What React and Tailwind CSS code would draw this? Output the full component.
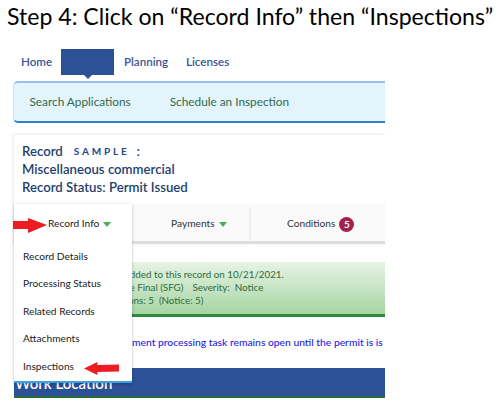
function RedArrow({ className, flip }) {
  return (
    <svg className={className} viewBox="0 0 34 15" preserveAspectRatio="none">
      <polygon
        fill="#ed1c24"
        points={flip ? "0,7.5 13,0 13,3.5 34,3 34,11 13,11.5 13,15" : "0,3 15,3 15,0 34,7 15,15 15,11 0,11"}
      />
    </svg>
  );
}

function Caret() {
  return <span className="inline-block w-0 h-0 border-l-[4px] border-r-[4px] border-t-[5px] border-l-transparent border-r-transparent border-t-[#4caf50]" />;
}

export default function App() {
  return (
    <div className="relative w-[500px] h-[404px] bg-white overflow-hidden font-['Lato',sans-serif]">
      <h1 className="h-[49px] pl-[7px] text-[23.1px] leading-[32px] text-black whitespace-nowrap">
        Step 4: Click on “Record Info” then “Inspections”
      </h1>

      <nav className="flex items-center h-[26px] pl-[21px] text-[11.6px] font-semibold text-[#3b5598]">
        <span className="w-[40px]">Home</span>
        <div className="relative w-[53px] h-[26px] bg-[#2c5197]">
          <span className="absolute left-[23px] top-[26px] w-0 h-0 border-l-[4px] border-r-[4px] border-t-[4px] border-l-transparent border-r-transparent border-t-[#2c5197]" />
        </div>
        <span className="ml-[10px] w-[62px]">Planning</span>
        <span>Licenses</span>
      </nav>

      <div className="ml-[13px] mt-[6px] w-[372px] h-[42px] flex items-center gap-[39px] pl-[15.5px] text-[11.8px] text-[#2f6b4a] bg-[#e4f4fc] border-t-2 border-t-[#93c1ec] border-b-2 border-b-[#2f7fd6] border-l border-l-[#d5e6f2] rounded-l-[5px]">
        <span>Search Applications</span>
        <span>Schedule an Inspection</span>
      </div>

      <div className="ml-[14px] mt-[11px] w-[371px] border-t border-t-[#eeeeee] shadow-[-1px_0_2px_#e8e8e8]">
        <div className="h-[69px] pl-[8px] pt-[7px] text-[13.2px] leading-[18px] font-semibold text-[#1d3f6e]">
          <div className="flex">
            <span>Record</span>
            <span className="ml-[11px] text-[10px] font-bold tracking-[2.8px] text-[#26468c]">SAMPLE</span>
            <span className="ml-[7px]">:</span>
          </div>
          <div>Miscellaneous commercial</div>
          <div>Record Status: Permit Issued</div>
        </div>

        <div className="flex h-[40px] pt-[3px] text-[10.2px] text-[#333] bg-[#fafafa] border-b-[3px] border-b-[#dddddd]">
          <div className="w-[118px]" />
          <div className="w-[119px] flex items-center pl-[39px] gap-[4px] border-r-2 border-r-[#eeeeee]">
            <span>Payments</span>
            <Caret />
          </div>
          <div className="flex items-center gap-[4px] pl-[36px]">
            <span>Conditions</span>
            <span className="w-[15px] h-[15px] rounded-full bg-[#a3214f] text-white text-[10px] font-bold flex items-center justify-center">5</span>
          </div>
        </div>
      </div>

      <div className="ml-[14px] mt-[18px] w-[371px] h-[55px] pl-[118px] text-[9.8px] leading-[13px] text-[#2f6b3a] bg-gradient-to-b from-[#e7f3e5] to-[#a5d5a3] border-b-[3px] border-b-[#2e8b3a] whitespace-nowrap overflow-hidden">
        <div className="pt-[6px] -ml-[7px]">added to this record on 10/21/2021.</div>
        <div className="-ml-[6px]">
          <span>te Final (SFG)</span>
          <span className="ml-[9px]">Severity:&nbsp; Notice</span>
        </div>
        <div className="-ml-[4px]">ons: 5&nbsp; (Notice: 5)</div>
      </div>

      <div className="ml-[132px] mt-[16px] w-[253px] h-[18px] text-[10.3px] leading-[18px] font-medium text-[#2222e6] whitespace-nowrap overflow-hidden">
        ment processing task remains open until the permit is is
      </div>

      <div className="ml-[14px] mt-[17px] w-[371px] h-[30px] bg-[#2c5197] border-b-[2px] border-b-[#2e6b3a] pl-[1px] text-white text-[15px] font-semibold leading-[30px]">
        Work Location
      </div>

      <div className="absolute left-[14px] top-[204px] w-[118px] h-[179px] z-10 bg-white shadow-[0_1px_3px_rgba(0,0,0,0.25)] border-b-2 border-b-[#3aa3e3] text-[10.2px] text-[#222]">
        <div className="relative h-[40px] flex items-center pl-[34px] gap-[4px]">
          <span>Record Info</span>
          <Caret />
        </div>
        <div className="flex flex-col pl-[9px] -mt-[1.5px]">
          <div className="h-[27.6px] flex items-center">Record Details</div>
          <div className="h-[27.6px] flex items-center">Processing Status</div>
          <div className="h-[27.6px] flex items-center">Related Records</div>
          <div className="h-[27.6px] flex items-center">Attachments</div>
          <div className="h-[27.6px] flex items-center">Inspections</div>
        </div>
      </div>

      <RedArrow className="absolute left-[13px] top-[218px] w-[34px] h-[15px] z-20" />
      <RedArrow flip className="absolute left-[84px] top-[362px] w-[35px] h-[13px] z-20" />
    </div>
  );
}
